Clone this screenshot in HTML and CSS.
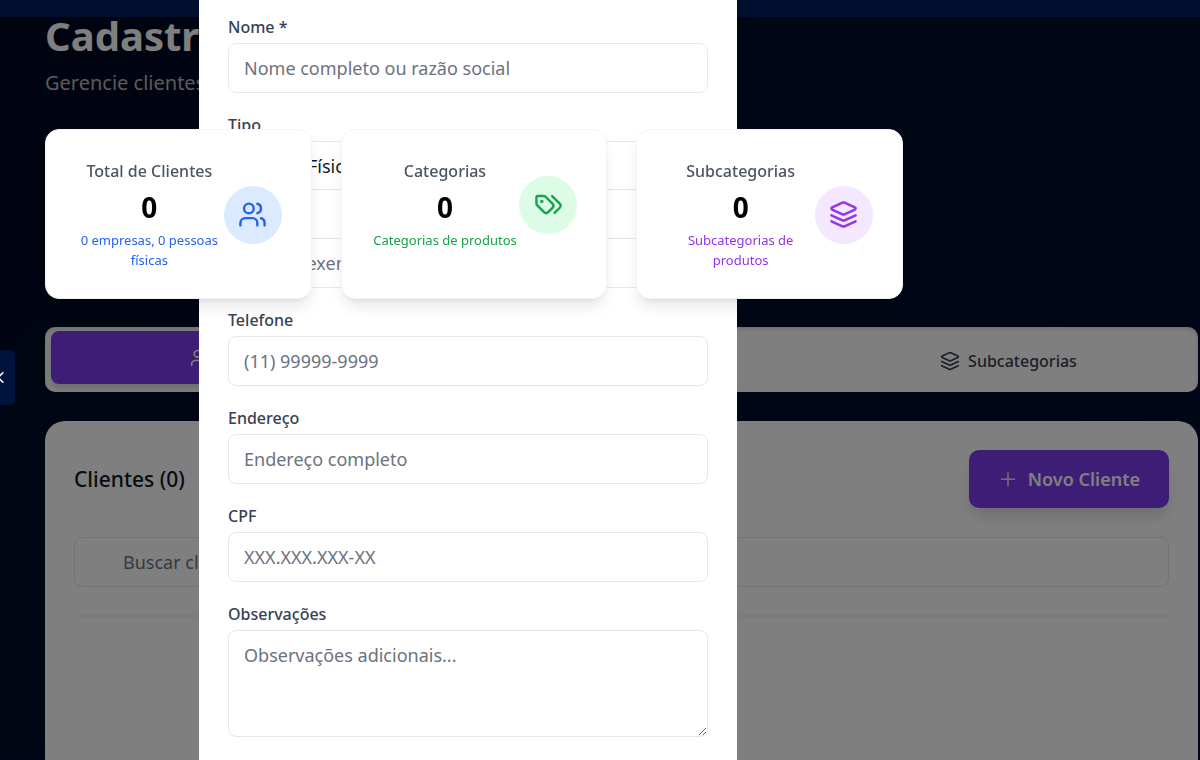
FILE: index.html
```html
<!DOCTYPE html>
<html lang="pt-BR">
<head>
<meta charset="utf-8">
<meta name="viewport" content="width=device-width, initial-scale=1">
<title>Cadastro</title>
<link rel="stylesheet" href="styles.css">
</head>
<body>
<svg class="sprite" aria-hidden="true">
  <symbol id="users" viewBox="0 0 24 24"><path d="M16 21v-2a4 4 0 0 0-4-4H6a4 4 0 0 0-4 4v2"/><circle cx="9" cy="7" r="4"/><path d="M22 21v-2a4 4 0 0 0-3-3.87M16 3.13a4 4 0 0 1 0 7.75"/></symbol>
  <symbol id="tags" viewBox="0 0 24 24"><path d="m15 5 6.3 6.3a2.4 2.4 0 0 1 0 3.4L17 19"/><path d="M9.586 5.586A2 2 0 0 0 8.172 5H3a1 1 0 0 0-1 1v5.172a2 2 0 0 0 .586 1.414L8.29 18.29a2.426 2.426 0 0 0 3.42 0l3.58-3.58a2.426 2.426 0 0 0 0-3.42z"/><circle cx="6.5" cy="9.5" r=".5" fill="currentColor"/></symbol>
  <symbol id="layers" viewBox="0 0 24 24"><path d="m12.83 2.18a2 2 0 0 0-1.66 0L2.6 6.08a1 1 0 0 0 0 1.83l8.58 3.91a2 2 0 0 0 1.66 0l8.58-3.9a1 1 0 0 0 0-1.83Z"/><path d="m22 12.65-9.17 4.16a2 2 0 0 1-1.66 0L2 12.65"/><path d="m22 17.65-9.17 4.16a2 2 0 0 1-1.66 0L2 17.65"/></symbol>
  <symbol id="plus" viewBox="0 0 24 24"><path d="M4 12h16M12 4v16"/></symbol>
  <symbol id="chevron" viewBox="0 0 24 24"><path d="m15 18-6-6 6-6"/></symbol>
</svg>

<div class="topbar"></div>
<button class="menu-toggle" type="button" aria-label="Abrir menu"><svg class="icon"><use href="#chevron"/></svg></button>

<main class="page">
  <header class="page-header">
    <h1>Cadastro</h1>
    <p>Gerencie clientes</p>
  </header>

  <section class="stats">
    <article class="stat">
      <div class="stat-row">
        <div class="stat-text">
          <h2>Total de Clientes</h2>
          <strong>0</strong>
          <p class="blue">0 empresas, 0 pessoas físicas</p>
        </div>
        <span class="badge badge-blue"><svg class="icon"><use href="#users"/></svg></span>
      </div>
    </article>
    <article class="stat">
      <div class="stat-row">
        <div class="stat-text">
          <h2>Categorias</h2>
          <strong>0</strong>
          <p class="green">Categorias de produtos</p>
        </div>
        <span class="badge badge-green"><svg class="icon"><use href="#tags"/></svg></span>
      </div>
    </article>
    <article class="stat">
      <div class="stat-row">
        <div class="stat-text">
          <h2>Subcategorias</h2>
          <strong>0</strong>
          <p class="purple">Subcategorias de produtos</p>
        </div>
        <span class="badge badge-purple"><svg class="icon"><use href="#layers"/></svg></span>
      </div>
    </article>
  </section>

  <nav class="tabs">
    <button class="tab active" type="button"><svg class="icon"><use href="#users"/></svg>Clientes</button>
    <button class="tab" type="button"><svg class="icon"><use href="#tags"/></svg>Categorias</button>
    <button class="tab" type="button"><svg class="icon"><use href="#layers"/></svg>Subcategorias</button>
  </nav>

  <section class="panel">
    <div class="panel-head">
      <h2>Clientes (0)</h2>
      <button class="primary" type="button"><svg class="icon"><use href="#plus"/></svg>Novo Cliente</button>
    </div>
    <input class="control search" type="search" aria-label="Buscar clientes" placeholder="Buscar clientes...">
    <hr>
  </section>
</main>

<div class="overlay">
  <form class="modal">
    <div class="field"><label for="nome">Nome *</label><input class="control" id="nome" type="text" placeholder="Nome completo ou razão social"></div>
    <div class="field"><label for="tipo">Tipo</label><select class="control" id="tipo"><option>Pessoa Física</option><option>Pessoa Jurídica</option></select></div>
    <div class="field"><label for="email">Email</label><input class="control" id="email" type="email" placeholder="email@exemplo.com"></div>
    <div class="field"><label for="telefone">Telefone</label><input class="control" id="telefone" type="tel" placeholder="(11) 99999-9999"></div>
    <div class="field"><label for="endereco">Endereço</label><input class="control" id="endereco" type="text" placeholder="Endereço completo"></div>
    <div class="field"><label for="cpf">CPF</label><input class="control" id="cpf" type="text" placeholder="XXX.XXX.XXX-XX"></div>
    <div class="field"><label for="obs">Observações</label><textarea class="control" id="obs" rows="3" placeholder="Observações adicionais..."></textarea></div>
  </form>
</div>
</body>
</html>
```
FILE: styles.css
```css
* { box-sizing: border-box; }

body {
  margin: 0;
  height: 100vh;
  overflow: hidden;
  display: flex;
  flex-direction: column;
  background: linear-gradient(135deg, #000820, #000c2a 40%, #000e2c);
  font-family: "Segoe UI", "Noto Sans", "Open Sans", sans-serif;
  color: #111827;
}

h1, h2, p { margin: 0; }
button, input, select, textarea { font: inherit; }
.sprite { display: none; }

.icon {
  width: 20px;
  height: 20px;
  flex: none;
  fill: none;
  stroke: currentColor;
  stroke-width: 2;
  stroke-linecap: round;
  stroke-linejoin: round;
}

.topbar { flex: none; height: 17px; background: #001f5c; }

.menu-toggle {
  position: fixed;
  left: 0;
  top: 350px;
  z-index: 30;
  width: 15px;
  height: 55px;
  padding: 0;
  border: 0;
  border-radius: 0 6px 6px 0;
  background: #00133d;
  color: #fff;
  display: flex;
  align-items: center;
  justify-content: center;
}
.menu-toggle .icon { width: 19px; height: 19px; margin-right: 14px; }

.page {
  flex: 1;
  min-height: 0;
  display: flex;
  flex-direction: column;
  padding: 0 2px 0 45px;
}

.page-header { margin-bottom: 32px; }
.page-header h1 { font-size: 40px; line-height: 38px; font-weight: 700; color: #fff; }
.page-header p { margin-top: 14px; font-size: 20px; line-height: 28px; color: #b4b6ba; }

.stats {
  position: relative;
  z-index: 20;
  display: grid;
  grid-template-columns: repeat(3, 1fr);
  gap: 29px;
  margin: 0 295px 28px 0;
}
.stat {
  padding: 29px 29px 28px;
  border: 1px solid #f3f4f6;
  border-radius: 14px;
  background: #fff;
  box-shadow: 0 10px 15px -3px rgba(0, 0, 0, .1), 0 4px 6px -4px rgba(0, 0, 0, .1);
}
.stat-row { display: flex; align-items: center; }
.stat-text { flex: 1; text-align: center; }
.stat-text h2 { font-size: 16px; line-height: 24px; font-weight: 500; color: #4b5563; }
.stat-text strong { display: block; margin: 6px 0 5px; font-size: 28px; line-height: 36px; color: #000; }
.stat-text p { font-size: 13px; line-height: 20px; }
.blue { color: #2563eb; }
.green { color: #16a34a; }
.purple { color: #9333ea; }

.badge {
  flex: none;
  display: grid;
  place-items: center;
  width: 58px;
  height: 58px;
  border-radius: 50%;
}
.badge .icon { width: 29px; height: 29px; }
.badge-blue { background: #dbeafe; color: #2563eb; }
.badge-green { background: #dcfce7; color: #16a34a; }
.badge-purple { background: #f3e8ff; color: #9333ea; }

.tabs {
  flex: none;
  display: grid;
  grid-template-columns: repeat(3, 1fr);
  gap: 20px;
  margin-bottom: 29px;
  padding: 4px 6px 8px;
  border-radius: 10px;
  background: #fff;
  box-shadow: inset 0 2px 4px rgba(0, 0, 0, .15);
}
.tab {
  display: flex;
  align-items: center;
  justify-content: center;
  gap: 8px;
  height: 53px;
  padding: 6px 0 0;
  border: 0;
  border-radius: 8px;
  background: transparent;
  color: #374151;
  font-size: 16px;
  font-weight: 500;
}
.tab.active { padding: 0; background: #7c3aed; color: #fff; box-shadow: 0 4px 6px rgba(0, 0, 0, .15); }

.panel { flex: 1; padding: 29px; border-radius: 20px 20px 0 0; background: #fff; }
.panel-head { display: flex; align-items: center; justify-content: space-between; margin-bottom: 29px; }
.panel-head h2 { font-size: 21px; font-weight: 500; }
.primary {
  display: flex;
  align-items: center;
  gap: 10px;
  height: 58px;
  padding: 0 29px;
  border: 0;
  border-radius: 10px;
  background: #7c3aed;
  color: #fff;
  font-size: 18px;
  font-weight: 600;
  box-shadow: 0 10px 15px -3px rgba(0, 0, 0, .15);
}
.primary .icon { stroke-width: 1.5; }
.panel hr { margin: 28px 0 0; border: 0; border-top: 2px solid #f3f4f6; }

.control {
  display: block;
  width: 100%;
  height: 50px;
  padding: 0 15px;
  border: 1px solid #e5e7eb;
  border-radius: 8px;
  outline: 0;
  background: #fff;
  color: #111827;
  font-size: 18px;
}
.control::placeholder { color: #6b7280; opacity: 1; }
.search { padding-left: 48px; }
select.control { height: 49px; appearance: none; }
textarea.control { height: 107px; padding-top: 11px; line-height: 26px; resize: vertical; }

.overlay {
  position: fixed;
  inset: 0;
  z-index: 10;
  display: flex;
  justify-content: center;
  padding-right: 264px;
  background: rgba(0, 0, 0, .5);
}
.modal {
  display: flex;
  flex-direction: column;
  gap: 20px;
  width: 538px;
  padding: 15px 29px;
  background: #fff;
}
.field { display: grid; gap: 4px; }
.field label { font-size: 16px; line-height: 24px; font-weight: 500; color: #374151; }
```
